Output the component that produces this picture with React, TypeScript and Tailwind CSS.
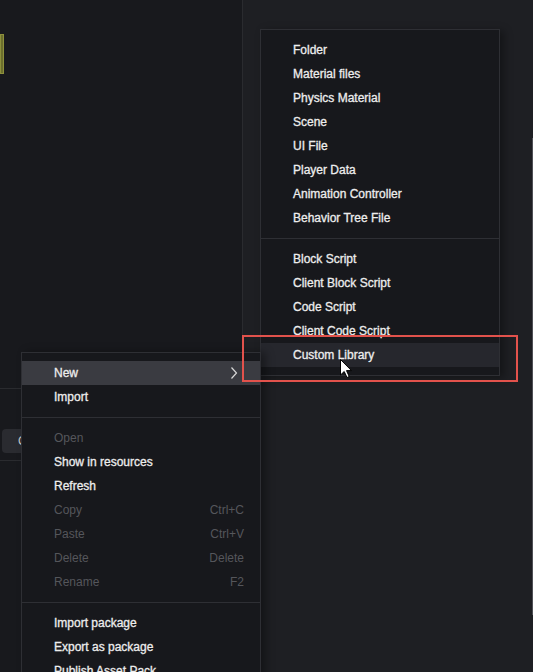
import React from 'react';

type Item = { label: string; disabled?: boolean; shortcut?: string; active?: boolean; submenu?: boolean };

const newItems: (Item | 'sep')[] = [
  { label: 'Folder' },
  { label: 'Material files' },
  { label: 'Physics Material' },
  { label: 'Scene' },
  { label: 'UI File' },
  { label: 'Player Data' },
  { label: 'Animation Controller' },
  { label: 'Behavior Tree File' },
  'sep',
  { label: 'Block Script' },
  { label: 'Client Block Script' },
  { label: 'Code Script' },
  { label: 'Client Code Script' },
  { label: 'Custom Library', active: true },
];

const mainItems: (Item | 'sep')[] = [
  { label: 'New', submenu: true, active: true },
  { label: 'Import' },
  'sep',
  { label: 'Open', disabled: true },
  { label: 'Show in resources' },
  { label: 'Refresh' },
  { label: 'Copy', disabled: true, shortcut: 'Ctrl+C' },
  { label: 'Paste', disabled: true, shortcut: 'Ctrl+V' },
  { label: 'Delete', disabled: true, shortcut: 'Delete' },
  { label: 'Rename', disabled: true, shortcut: 'F2' },
  'sep',
  { label: 'Import package' },
  { label: 'Export as package' },
  { label: 'Publish Asset Pack' },
];

const MenuRow = ({ item, hover }: { item: Item; hover: string }) => (
  <div
    className={`h-[24px] flex items-center pl-[32px] pr-[16px] text-[12px] ${item.active ? hover : ''} ${
      item.disabled ? 'text-[#55565b]' : 'text-[#ededed] [-webkit-text-stroke:0.3px_#ededed]'
    }`}
  >
    <span className="flex-1">{item.label}</span>
    {item.shortcut && <span>{item.shortcut}</span>}
    {item.submenu && (
      <svg width="8" height="12" viewBox="0 0 8 12" className="mr-[6px]">
        <polyline points="1.5,0.5 6.5,6 1.5,11.5" fill="none" stroke="#d8d8d8" strokeWidth="1.2" />
      </svg>
    )}
  </div>
);

const Menu = ({ items, hover, className }: { items: (Item | 'sep')[]; hover: string; className: string }) => (
  <div className={`absolute bg-[#17181c] border border-[#2e2f34] pt-[8px] pb-[8px] ${className}`}>
    {items.map((item, i) =>
      item === 'sep' ? (
        <div key={i} className="mt-[8px] mb-[8px] h-px bg-[#2e2f34]" />
      ) : (
        <MenuRow key={i} item={item} hover={hover} />
      )
    )}
  </div>
);

export default function App() {
  return (
    <div className="relative w-[533px] h-[672px] overflow-hidden flex bg-[#18191d] font-['Liberation_Sans',Arial,sans-serif]">
      {/* left panel */}
      <div className="w-[243px] h-full border-r border-[#2a2b2f] flex flex-col">
        <div className="mt-[34px] w-[4px] h-[40px] bg-[#6b6e2c] border border-[#8c8f3c]" />
        <div className="mt-[314px] h-px bg-[#2a2b2f]" />
        <div className="mt-[40px] ml-[2px] w-[40px] h-[24px] bg-[#2a2b30] rounded-sm text-[#c8c8c8] text-[12px] leading-[24px] pl-[16px]">C</div>
        <div className="mt-[7px] h-px bg-[#2a2b2f]" />
      </div>

      {/* right panel */}
      <div className="flex-1 h-full bg-[#1e1f23] flex justify-end">
        <div className="mt-[138px] w-px h-[477px] bg-[#4e4f55]" />
      </div>

      {/* New submenu */}
      <Menu
        items={newItems}
        hover="bg-[#26272d]"
        className="left-[260px] top-[29px] w-[240px] pt-[7px] pb-[8px] shadow-[4px_2px_8px_rgba(0,0,0,0.35)]"
      />

      {/* context menu */}
      <Menu
        items={mainItems}
        hover="bg-[#3a3b41]"
        className="left-[21px] top-[352px] w-[240px] shadow-[5px_0_8px_rgba(0,0,0,0.35)]"
      />

      {/* highlight box */}
      <div className="absolute left-[242px] top-[335px] w-[276px] h-[47px] border-2 border-[#e2524c]" />

      {/* cursor */}
      <svg className="absolute left-[340px] top-[359px]" width="13" height="20" viewBox="0 0 13 20">
        <path d="M0.5 0.5 L0.5 16 L4.2 12.5 L7 18.5 L9.2 17.5 L6.5 11.6 L11.5 11.6 Z" fill="#ffffff" stroke="#000000" strokeWidth="1" />
      </svg>
    </div>
  );
}
